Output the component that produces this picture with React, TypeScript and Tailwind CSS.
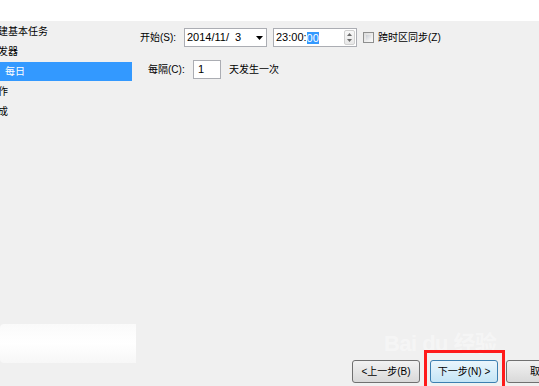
import React from 'react'

const FONT = { fontFamily: '"Liberation Sans", "Noto Sans CJK SC", sans-serif' }

// wizard steps, first chars are clipped by the left edge
const steps = [
  { label: '创建基本任务', indent: false, active: false },
  { label: '触发器', indent: false, active: false },
  { label: '每日', indent: true, active: true },
  { label: '操作', indent: false, active: false },
  { label: '完成', indent: false, active: false },
]

function Caret({ up = false }: { up?: boolean }) {
  return (
    <svg width="5" height="3" viewBox="0 0 5 3" className="block">
      <path d={up ? 'M0 3 L2.5 0 L5 3 Z' : 'M0 0 L5 0 L2.5 3 Z'} fill="#6d6d6d" />
    </svg>
  )
}

function WizButton({ children, focused = false, className = '' }: { children: React.ReactNode; focused?: boolean; className?: string }) {
  return (
    <button
      className={`h-[23px] w-[68px] flex-shrink-0 rounded-[3px] border text-[10px] text-black flex items-center justify-center ${
        focused
          ? 'border-[#3c7fb1] bg-gradient-to-b from-[#eaf6fd] to-[#c4e5f6]'
          : 'border-[#707070] bg-gradient-to-b from-[#f2f2f2] to-[#d9d9d9]'
      } ${className}`}
    >
      {children}
    </button>
  )
}

export default function App() {
  return (
    <div className="relative w-[539px] h-[386px] overflow-hidden bg-[#f0f0f0] flex flex-col text-black" style={FONT}>
      {/* header strip */}
      <div className="h-[21px] bg-white flex-shrink-0" />

      <div className="flex-1 flex min-h-0">
        {/* step list */}
        <div className="w-[140px] flex-shrink-0 flex flex-col overflow-hidden">
          <div className="flex flex-col">
            {steps.map((s) => (
              <div key={s.label} className="h-[20px] flex items-center">
                <div
                  className={`h-[19px] flex items-center text-[10px] whitespace-nowrap ${
                    s.active ? 'w-[132px] bg-[#3399ff] text-white pl-[5px]' : 'ml-[-12px]'
                  }`}
                >
                  {s.label}
                </div>
              </div>
            ))}
          </div>
          {/* blurred patch */}
          <div className="mt-auto mb-[23px] w-[136px] h-[39px] bg-gradient-to-b from-[#fafafa] via-white to-[#f7f7f7] rounded-l-[4px]" />
        </div>

        {/* form */}
        <div className="flex-1 flex flex-col pt-[7px]">
          <div className="flex items-center h-[19px]">
            <span className="w-[44px] text-[10px]">开始(S):</span>
            <div className="w-[83px] h-[19px] bg-white border border-[#abadb3] flex items-center justify-between pl-[2px] pr-[3px]">
              <span className="text-[11px]">2014/11/&nbsp;&nbsp;3</span>
              <svg width="7" height="4" viewBox="0 0 7 4">
                <path d="M0 0 L7 0 L3.5 4 Z" fill="#000" />
              </svg>
            </div>
            <div className="ml-[6px] w-[84px] h-[19px] bg-white border border-[#abadb3] flex items-center pl-[2px]">
              <span className="text-[11px]">23:00:</span>
              <span className="text-[11px] bg-[#3399ff] text-white leading-[12px]">00</span>
              <div className="ml-auto mr-[1px] w-[11px] h-[15px] border border-[#d0d0d0] rounded-[2px] bg-gradient-to-b from-[#f8f8f8] to-[#e8e8e8] flex flex-col items-center justify-around py-[1px]">
                <Caret up />
                <Caret />
              </div>
            </div>
            <div className="ml-[6px] w-[11px] h-[11px] border border-[#8e8f8f] bg-gradient-to-br from-[#dcdcdc] to-[#fafafa] p-[2px]">
              <div className="w-full h-full bg-gradient-to-br from-[#cbcfd5] to-[#f6f6f6]" />
            </div>
            <span className="ml-[4px] text-[10px]">跨时区同步(Z)</span>
          </div>

          <div className="flex items-center h-[19px] mt-[13px] pl-[8px]">
            <span className="w-[45px] text-[10px]">每隔(C):</span>
            <div className="w-[28px] h-[19px] bg-white border border-[#abadb3] flex items-center pl-[4px]">
              <span className="text-[11px]">1</span>
            </div>
            <span className="ml-[8px] text-[10px]">天发生一次</span>
          </div>

          {/* wizard buttons */}
          <div className="mt-auto mb-[3px] flex pl-[212px]">
            <WizButton>&lt;上一步(B)</WizButton>
            <WizButton focused className="ml-[10px]">下一步(N) &gt;</WizButton>
            <WizButton className="ml-[8px]">取消</WizButton>
          </div>
        </div>
      </div>

      {/* watermark */}
      <div className="absolute left-[384px] top-[333px] text-[22px] font-bold text-white/40 tracking-tight leading-none pointer-events-none">
        Bai du 经验
      </div>

      {/* red annotation box */}
      <div className="absolute left-[424px] top-[350px] w-[81px] h-[44px] border-[3px] border-[#ff1a1a]" />
    </div>
  )
}
